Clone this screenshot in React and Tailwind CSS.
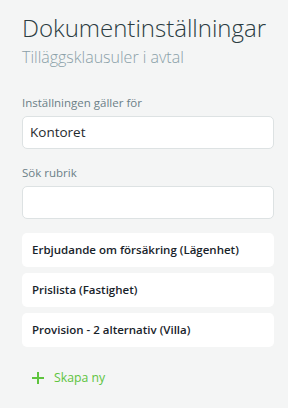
export default function App() {
  const items = [
    "Erbjudande om försäkring (Lägenhet)",
    "Prislista (Fastighet)",
    "Provision - 2 alternativ (Villa)",
  ];
  return (
    <div
      className="w-[288px] h-[408px] bg-[#f4f5f5] pl-[22px] pr-[14px] pt-[13px] overflow-hidden"
      style={{ fontFamily: '"Open Sans", sans-serif' }}
    >
      <h1 className="text-[24px] leading-[30px] font-light text-[#2b3c42]">
        Dokumentinställningar
      </h1>
      <p className="text-[16px] leading-[20px] font-light text-[#8aa0a8] mt-[4px]">
        Tilläggsklausuler i avtal
      </p>

      <label className="block text-[11.5px] leading-[16px] text-[#6b8087] mt-[28px]">
        Inställningen gäller för
      </label>
      <div className="mt-[5px] h-[33px] bg-white border border-[#dde2e3] rounded-[5px] flex items-center px-[7px] text-[13.5px] text-[#1f2a2e]">
        Kontoret
      </div>

      <label className="block text-[11.5px] leading-[16px] text-[#6b8087] mt-[16px]">
        Sök rubrik
      </label>
      <div className="mt-[5px] h-[33px] bg-white border border-[#dde2e3] rounded-[5px]" />

      <div className="mt-[14px] flex flex-col gap-[6px]">
        {items.map((t) => (
          <div
            key={t}
            className="h-[34px] bg-white rounded-[5px] flex items-center px-[10px] text-[11.5px] font-semibold text-[#18232a]"
          >
            {t}
          </div>
        ))}
      </div>

      <button className="mt-[22px] ml-[10px] flex items-center gap-[10px] text-[#5ec43e] text-[12.25px]">
        <svg width="12" height="12" viewBox="0 0 12 12">
          <path d="M6 0v12M0 6h12" stroke="#5ec43e" strokeWidth="2" />
        </svg>
        Skapa ny
      </button>
    </div>
  );
}
